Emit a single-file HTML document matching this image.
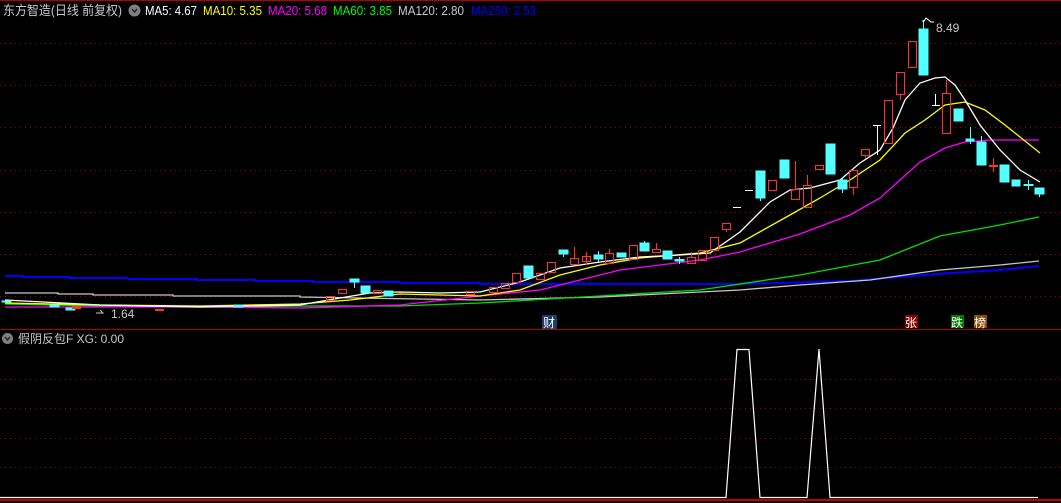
<!DOCTYPE html>
<html><head><meta charset="utf-8"><style>
html,body{margin:0;padding:0;background:#000;width:1061px;height:503px;overflow:hidden}
svg{display:block}
text{font-family:"Liberation Sans","Noto Sans CJK SC",sans-serif}
</style></head><body>
<svg width="1061" height="503" viewBox="0 0 1061 503" xmlns="http://www.w3.org/2000/svg">
<rect width="1061" height="503" fill="#000"/>
<line x1="0" y1="0.5" x2="1061" y2="0.5" stroke="#b00000" stroke-width="1"/>
<g stroke="#a00000" stroke-width="1" stroke-dasharray="1,4">
<line x1="0" y1="43.5" x2="1061" y2="43.5"/>
<line x1="0" y1="85.5" x2="1061" y2="85.5"/>
<line x1="0" y1="127.5" x2="1061" y2="127.5"/>
<line x1="0" y1="170.5" x2="1061" y2="170.5"/>
<line x1="0" y1="212.5" x2="1061" y2="212.5"/>
<line x1="0" y1="254.5" x2="1061" y2="254.5"/>
<line x1="0" y1="296.5" x2="1061" y2="296.5"/>
<line x1="0" y1="379.5" x2="1061" y2="379.5"/>
<line x1="0" y1="408.5" x2="1061" y2="408.5"/>
<line x1="0" y1="438.5" x2="1061" y2="438.5"/>
<line x1="0" y1="467.5" x2="1061" y2="467.5"/>
</g>
<line x1="0" y1="329.5" x2="1061" y2="329.5" stroke="#b00000"/>
<line x1="0" y1="500" x2="1061" y2="500" stroke="#c00000" stroke-width="2"/>

<g fill="none" stroke-width="1.3">
<polyline stroke="#0000ff" stroke-width="2" points="5,276 23,276 23,277 70,277 70,278 128,278 128,279 197,279 197,280 255,280 255,281 313,281 313,282 400,282 400,283 480,283 480,284 740,284 780,283 850,281 900,277 950,273 1000,270 1039,266"/>
<polyline stroke="#c8c8c8" points="5,293 58,293 58,294 93,294 93,295 173,295 173,296 300,296 300,297 480,300 600,297 740,290 800,285 870,280 940,270 1000,265 1039,261"/>
<polyline stroke="#00e000" points="5,304 100,306 200,307 300,306 400,306 480,303 600,296 700,290 800,275 880,260 940,236 1000,225 1039,217"/>
<polyline stroke="#ff00ff" points="5,307 100,307 200,307 300,308 400,305 480,296 540,290 580,280 620,270 660,265 700,260 740,252 800,234 850,215 880,198 900,180 920,162 945,148 965,142 990,140 1039,140"/>
<polyline stroke="#ffff00" points="5,303 100,305 200,306 300,304 350,300 400,294 480,296 520,290 560,275 600,265 640,258 700,253 740,243 790,215 820,198 850,180 880,160 905,133 925,120 945,105 965,102 985,110 1005,125 1040,153"/>
<polyline stroke="#ffffff" points="5,300 100,305 200,307 300,305 340,298 370,293 400,292 440,293 480,292 520,282 560,268 600,262 640,257 680,255 710,253 740,232 757,215 770,202 790,190 810,188 840,180 860,163 880,150 893,128 905,100 920,83 935,78 945,77 955,85 965,100 980,125 1000,150 1020,170 1040,182"/>
</g>

<g fill="#54ffff" stroke="#54ffff">
<rect x="524" y="266" width="9" height="12"/>
<rect x="559" y="250" width="9" height="4"/><line x1="563.5" y1="254" x2="563.5" y2="257"/>
<rect x="594" y="255" width="9" height="4"/><line x1="598.5" y1="251" x2="598.5" y2="262"/>
<rect x="617" y="253" width="9" height="4"/>
<rect x="640" y="243" width="9" height="8"/><line x1="644.5" y1="241" x2="644.5" y2="243"/>
<rect x="663" y="251" width="9" height="8"/>
<rect x="675" y="259.5" width="9" height="1.5"/><line x1="679.5" y1="257" x2="679.5" y2="264"/>
<rect x="756" y="171" width="9" height="27"/><line x1="760.5" y1="198" x2="760.5" y2="201"/>
<rect x="780" y="160" width="9" height="18"/>
<rect x="826" y="144" width="9" height="30"/>
<rect x="838" y="180" width="9" height="9"/><line x1="842.5" y1="177" x2="842.5" y2="193"/>
<rect x="919" y="29" width="9" height="46"/><line x1="923.5" y1="22" x2="923.5" y2="29"/>
<rect x="954" y="109" width="9" height="12"/>
<rect x="966" y="139" width="8" height="2"/><line x1="970.5" y1="127" x2="970.5" y2="144"/>
<rect x="977" y="142" width="9" height="23"/><line x1="981.5" y1="136" x2="981.5" y2="142"/>
<rect x="1000" y="165" width="9" height="17"/>
<rect x="1012" y="180" width="8" height="6"/>
<rect x="1024" y="184.5" width="9" height="1"/><line x1="1028.5" y1="180" x2="1028.5" y2="190"/>
<rect x="1035" y="188" width="9" height="6"/><line x1="1039.5" y1="194" x2="1039.5" y2="197"/>
<rect x="350" y="279" width="9" height="3"/><line x1="354.5" y1="282" x2="354.5" y2="288"/>
<rect x="361" y="286" width="9" height="7"/>
<rect x="384" y="291" width="9" height="5"/>
<rect x="2" y="301" width="9" height="1"/>
<rect x="50" y="305" width="9" height="2"/>
<rect x="66" y="308" width="9" height="2"/>
<rect x="234" y="305" width="9" height="2"/>
</g>
<g fill="none" stroke="#ff3232" stroke-width="1">
<rect x="489.5" y="287.5" width="8" height="5"/>
<rect x="501.5" y="283.5" width="8" height="5"/>
<rect x="512.5" y="273.5" width="8" height="9"/>
<rect x="536.5" y="273.5" width="8" height="6"/>
<rect x="547.5" y="262.5" width="8" height="10"/>
<rect x="570.5" y="258.5" width="8" height="6"/><line x1="574.5" y1="247" x2="574.5" y2="258"/>
<rect x="582.5" y="256.5" width="8" height="5"/><line x1="586.5" y1="252" x2="586.5" y2="265"/>
<rect x="605.5" y="253.5" width="8" height="10"/><line x1="609.5" y1="249" x2="609.5" y2="253"/>
<rect x="629.5" y="245.5" width="8" height="14"/>
<rect x="652.5" y="249.5" width="8" height="3"/><line x1="656.5" y1="243" x2="656.5" y2="249"/>
<rect x="687.5" y="257.5" width="8" height="6"/><line x1="691.5" y1="252" x2="691.5" y2="257"/>
<rect x="698.5" y="250.5" width="8" height="10"/>
<rect x="710.5" y="237.5" width="8" height="13"/>
<rect x="722.5" y="223.5" width="8" height="6"/><line x1="726.5" y1="230" x2="726.5" y2="232"/>
<rect x="768.5" y="180.5" width="8" height="10"/>
<rect x="791.5" y="189.5" width="8" height="10"/><line x1="795.5" y1="161" x2="795.5" y2="189"/>
<rect x="803.5" y="185.5" width="8" height="22"/><line x1="807.5" y1="175" x2="807.5" y2="185"/>
<rect x="815.5" y="165.5" width="8" height="4"/>
<rect x="849.5" y="170.5" width="8" height="17"/><line x1="853.5" y1="187" x2="853.5" y2="195"/>
<rect x="861.5" y="149.5" width="8" height="6"/><line x1="865.5" y1="156" x2="865.5" y2="159"/>
<rect x="884.5" y="100.5" width="8" height="43"/>
<rect x="896.5" y="72.5" width="8" height="22"/><line x1="900.5" y1="95" x2="900.5" y2="100"/>
<rect x="908.5" y="41.5" width="8" height="26"/>
<rect x="942.5" y="93.5" width="8" height="40"/><line x1="946.5" y1="80" x2="946.5" y2="93"/>
<rect x="338.5" y="289.5" width="8" height="4"/>
<rect x="326.5" y="296.5" width="8" height="4"/>
<rect x="373.5" y="290.5" width="8" height="3"/>
<rect x="466.5" y="291.5" width="8" height="3"/>
</g>
<g stroke="#ff3232" stroke-width="2"><line x1="989" y1="166" x2="998" y2="166"/></g>
<line x1="993.5" y1="158" x2="993.5" y2="172" stroke="#ff3232"/>
<g fill="#ff3232"><rect x="72" y="306" width="9" height="3"/><rect x="155" y="309" width="9" height="2"/></g>
<g stroke="#fff" stroke-width="1">
<line x1="733" y1="207.5" x2="741" y2="207.5"/>
<line x1="745" y1="190.5" x2="753" y2="190.5"/>
<line x1="873" y1="125.5" x2="881" y2="125.5"/><line x1="877.5" y1="125" x2="877.5" y2="155"/>
<line x1="932" y1="105.5" x2="940" y2="105.5"/><line x1="935.5" y1="94" x2="935.5" y2="105"/>
<line x1="923" y1="20" x2="923" y2="22"/>
<polyline fill="none" points="923.5,22 926,18 931,22 934,22"/>
</g>
<text x="936" y="32" fill="#c8c8c8" font-size="12">8.49</text>
<polyline fill="none" stroke="#c8c8c8" points="96,313 103,313 100,310"/>
<text x="111" y="318" fill="#c8c8c8" font-size="12">1.64</text>

<rect x="542" y="315" width="15" height="14" fill="#1a3c70"/>
<text x="543" y="327" fill="#fff" font-size="12">财</text>
<rect x="905" y="315" width="13" height="13" fill="#8b0000"/>
<text x="905" y="327" fill="#fff" font-size="12">张</text>
<rect x="951" y="315" width="13" height="13" fill="#007a00"/>
<text x="951" y="327" fill="#fff" font-size="12">跌</text>
<rect x="974" y="315" width="13" height="13" fill="#8b4a00"/>
<text x="974" y="327" fill="#fff" font-size="12">榜</text>

<text x="3" y="15" fill="#c8c8c8" font-size="13" textLength="119" lengthAdjust="spacingAndGlyphs">东方智造(日线 前复权)</text>
<circle cx="134.5" cy="10.5" r="6" fill="#808080"/>
<polyline points="132,9 134.5,12 137,9" fill="none" stroke="#222" stroke-width="1.4"/>
<g font-size="13">
<text x="145" y="15" fill="#ffffff" textLength="52" lengthAdjust="spacingAndGlyphs">MA5: 4.67</text>
<text x="203" y="15" fill="#ffff00" textLength="59" lengthAdjust="spacingAndGlyphs">MA10: 5.35</text>
<text x="268" y="15" fill="#ff00ff" textLength="59" lengthAdjust="spacingAndGlyphs">MA20: 5.68</text>
<text x="333" y="15" fill="#00ff00" textLength="59" lengthAdjust="spacingAndGlyphs">MA60: 3.85</text>
<text x="398" y="15" fill="#c8c8c8" textLength="66" lengthAdjust="spacingAndGlyphs">MA120: 2.80</text>
<text x="471" y="15" fill="#0000ff" textLength="65" lengthAdjust="spacingAndGlyphs">MA250: 2.53</text>
</g>

<circle cx="7.5" cy="338.5" r="5.5" fill="#808080"/>
<polyline points="5,337 7.5,340 10,337" fill="none" stroke="#222" stroke-width="1.4"/>
<text x="18" y="343" fill="#c8c8c8" font-size="12" textLength="106" lengthAdjust="spacingAndGlyphs">假阴反包F  XG: 0.00</text>
<polyline fill="none" stroke="#fff" stroke-width="1.2" points="0,497.5 726,497.5 737,349.5 749,349.5 760,497.5 807,497.5 819,349 830,497.5 1038,497.5"/>
</svg>
</body></html>
